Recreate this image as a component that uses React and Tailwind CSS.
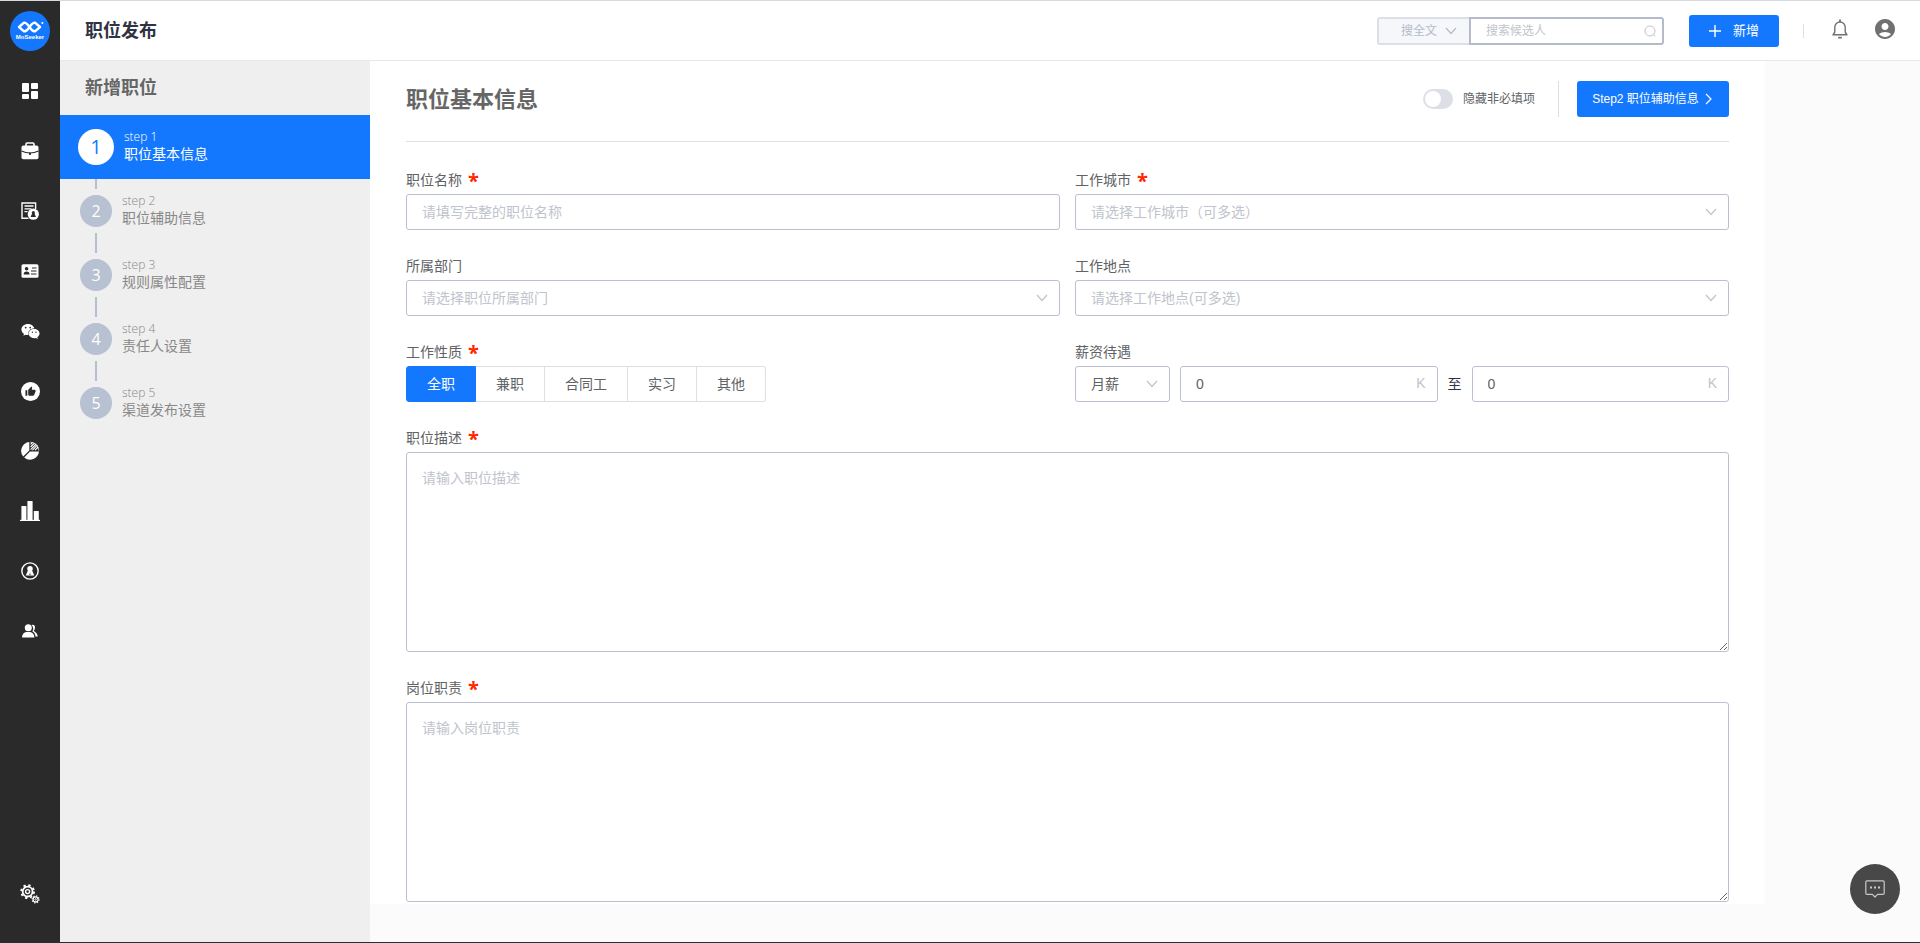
import { useState } from 'react';
import { FaWeixin } from 'react-icons/fa';
import { MdAccountCircle, MdThumbUp } from 'react-icons/md';

const DashboardIcon = () => (
  <svg width="16" height="16" viewBox="0 0 16 16" fill="currentColor">
    <rect x="0" y="0" width="7" height="9" rx="1" />
    <rect x="9" y="0" width="7" height="6" rx="1" />
    <rect x="0" y="11" width="7" height="5" rx="1" />
    <rect x="9" y="8" width="7" height="8" rx="1" />
  </svg>
);

const BriefcaseIcon = () => (
  <svg width="18" height="18" viewBox="0 0 18 18">
    <path d="M5 4V2.2Q5 1 6.2 1h5.6Q13 1 13 2.2V4" fill="none" stroke="currentColor" strokeWidth="1.6" />
    <rect x="0.5" y="3.6" width="17" height="13.6" rx="1.8" fill="currentColor" />
    <path d="M0.5 9Q9 13 17.5 9" fill="none" stroke="#2a2a2a" strokeWidth="1.1" />
    <rect x="8" y="10.4" width="2" height="2.6" rx="0.8" fill="#2a2a2a" />
  </svg>
);

const ResumeIcon = () => (
  <svg width="18" height="18" viewBox="0 0 18 18">
    <path d="M7.5 16.3H1V1h13.6v6" fill="none" stroke="currentColor" strokeWidth="1.4" />
    <path d="M3.5 4h9M3.5 6.8h7M3.5 9.6h3" stroke="currentColor" strokeWidth="1.3" />
    <circle cx="12.3" cy="12.2" r="5.6" fill="currentColor" />
    <circle cx="12.3" cy="10.4" r="1.5" fill="#2a2a2a" />
    <path d="M11.3 11h2l1.7 4H9.6z" fill="#2a2a2a" />
  </svg>
);

const IdCardIcon = () => (
  <svg width="18" height="14" viewBox="0 0 18 14">
    <rect x="0.5" y="0.2" width="17" height="13.6" rx="1.6" fill="currentColor" />
    <circle cx="5.6" cy="4.8" r="1.8" fill="#2a2a2a" />
    <path d="M2.6 10.4q0-3 3-3t3 3z" fill="#2a2a2a" />
    <path d="M11 4h4.5M10 7h5.5M10 10h5.5" stroke="#2a2a2a" strokeWidth="1.1" />
  </svg>
);

const ThumbIcon = () => (
  <span className="flex size-[19px] items-center justify-center rounded-full bg-white text-[#2a2a2a]">
    <MdThumbUp size={11} />
  </span>
);

const PieIcon = () => (
  <svg width="20" height="20" viewBox="0 0 20 20">
    <path d="M9.3 9.6V1A9 9 0 0 0 3.2 15.6z" fill="currentColor" />
    <path d="M10 10.6h9A9 9 0 0 1 4.2 16.4z" fill="currentColor" />
    <path d="M10.6 3.4l2-2M10.6 6l3.8-3.8M10.6 8.6l5.6-5.6M12.4 9.2l5-5M15 9.2l3.2-3.2" stroke="currentColor" strokeWidth="1.1" />
    <path d="M10.4 1.2a8.6 8.6 0 0 1 8.4 8.3" fill="none" stroke="currentColor" strokeWidth="0.7" />
  </svg>
);

const BarsIcon = () => (
  <svg width="20" height="20" viewBox="0 0 20 20" fill="currentColor">
    <rect x="1.4" y="5" width="5" height="14" rx="0.6" />
    <rect x="7.4" y="0" width="5.2" height="19" rx="0.6" />
    <rect x="13.8" y="10" width="5" height="9" rx="0.6" />
    <rect x="0" y="18.8" width="20" height="1.2" />
  </svg>
);

const PersonRingIcon = () => (
  <svg width="18" height="18" viewBox="0 0 19 19">
    <circle cx="9.5" cy="9.5" r="8.6" fill="none" stroke="currentColor" strokeWidth="1.5" />
    <circle cx="9.5" cy="7.2" r="2.9" fill="currentColor" />
    <path d="M7.4 8.8h4.2l2.400 5.400H5z" fill="currentColor" />
    <path d="M9.5 11l.7 2.600H8.800z" fill="#2a2a2a" />
  </svg>
);

const UsersIcon = () => (
  <svg width="16" height="14" viewBox="0 0 16 14" fill="currentColor">
    <circle cx="6.3" cy="3.8" r="3.5" />
    <path d="M0 13.6q0-4.2 4-5.6h4.4q4 1.4 4 5.6z" />
    <path d="M9.6 1q3.4-.8 3.4 2.6 0 2-1.2 3.4 3.4 1.8 4 5.6h-2.3q-.4-3.8-3.1-5 2-3.6-.8-6.6z" />
  </svg>
);

const GearsIcon = () => (
  <svg width="20" height="20" viewBox="0 0 20 20" fill="none" stroke="currentColor">
    <circle cx="7.6" cy="7.6" r="4.9" strokeWidth="1.8" />
    <circle cx="7.6" cy="7.6" r="6.4" strokeWidth="1.9" strokeDasharray="2.3 2.727" />
    <circle cx="7.6" cy="7.6" r="2" strokeWidth="1.4" />
    <circle cx="15.6" cy="15.4" r="2.5" strokeWidth="1.2" />
    <circle cx="15.6" cy="15.4" r="3.5" strokeWidth="1.2" strokeDasharray="1.25 1.5" />
    <circle cx="15.6" cy="15.4" r="0.8" strokeWidth="0.8" />
  </svg>
);

const LogoMark = () => (
  <svg width="28" height="12" viewBox="0 0 28 12" fill="none" stroke="currentColor">
    <path
      d="M13.500 6Q10.600 1.600 8 1.600L3 6l5 4.400Q10.600 10.400 13.500 6t5.500-4.400L24 6l-5 4.400Q16.400 10.400 13.500 6z"
      strokeWidth="2.400"
      strokeLinejoin="round"
    />
    <circle cx="26.400" cy="2" r="1" fill="currentColor" stroke="none" />
  </svg>
);

const ChevronDown = ({ className = '' }) => (
  <svg width="12" height="8" viewBox="0 0 12 8" fill="none" stroke="currentColor" strokeWidth="1.2" className={className}>
    <path d="M1 1l5 5.5L11 1" />
  </svg>
);

const BellIcon = () => (
  <svg width="18" height="20" viewBox="0 0 18 20" fill="none" stroke="currentColor" strokeWidth="1.4">
    <path d="M9 3a5.2 5.2 0 0 0-5.2 5.2V13L2 15.8h14L14.2 13V8.2A5.2 5.2 0 0 0 9 3z" strokeLinejoin="round" />
    <path d="M9 .6V3M7.2 18.6h3.6" strokeWidth="1.8" />
  </svg>
);

const ChatIcon = () => (
  <svg width="20" height="18" viewBox="0 0 20 18" fill="none" stroke="currentColor" strokeWidth="1.2">
    <path d="M2 .8h16q1.2 0 1.2 1.2v11.2q0 1.2-1.2 1.2h-5.4L10 17l-2.6-2.6H2q-1.2 0-1.2-1.2V2Q.8.8 2 .8z" strokeLinejoin="round" />
    <path d="M5 7.5h2M9 7.5h2M13 7.5h2" strokeWidth="1.8" />
  </svg>
);

const nav = [
  { label: '工作台', Icon: DashboardIcon },
  { label: '职位', Icon: BriefcaseIcon },
  { label: '简历', Icon: ResumeIcon },
  { label: '人才库', Icon: IdCardIcon },
  { label: '微信', Icon: () => <FaWeixin size={19} /> },
  { label: '推荐', Icon: ThumbIcon },
  { label: '分析', Icon: PieIcon },
  { label: '报表', Icon: BarsIcon },
  { label: '账号', Icon: PersonRingIcon },
  { label: '团队', Icon: UsersIcon },
];

const steps = ['职位基本信息', '职位辅助信息', '规则属性配置', '责任人设置', '渠道发布设置'];

const jobTypes = ['全职', '兼职', '合同工', '实习', '其他'];

const controlClass =
  'w-full h-9 rounded-[3px] border border-[#bac0d0] bg-white px-[15px] text-sm outline-none placeholder:text-[#c0c4cc]';

function Label({ htmlFor, required, children }) {
  return (
    <label htmlFor={htmlFor} className="mb-1 flex h-5 items-center gap-1.5 text-sm text-[#606266]">
      {children}
      {required && <span className="h-3 font-['Open_Sans'] text-xl leading-3.5 font-bold text-[#ff2600]">*</span>}
    </label>
  );
}

function SelectField({ id, label, required, placeholder }) {
  return (
    <div>
      <Label htmlFor={id} required={required}>{label}</Label>
      <div className="relative">
        <select id={id} className={`${controlClass} appearance-none text-[#c0c4cc]`}>
          <option>{placeholder}</option>
        </select>
        <ChevronDown className="pointer-events-none absolute top-3.5 right-3 text-[#c0c4cc]" />
      </div>
    </div>
  );
}

function TextareaField({ id, label, placeholder }) {
  return (
    <div>
      <Label htmlFor={id} required>{label}</Label>
      <textarea
        id={id}
        placeholder={placeholder}
        className="block h-[200px] w-full resize rounded-[3px] border border-[#bac0d0] bg-white p-[15px] text-sm outline-none placeholder:text-[#c0c4cc]"
      />
    </div>
  );
}

function SalaryInput({ label }) {
  return (
    <div className="relative flex-1">
      <input type="text" defaultValue="0" aria-label={label} className={`${controlClass} text-[#606266]`} />
      <span className="absolute top-0 right-3 text-sm leading-[34px] text-[#c0c4cc]">K</span>
    </div>
  );
}

function Sidebar() {
  return (
    <aside className="flex w-15 shrink-0 flex-col items-center bg-[#2a2a2a] text-white">
      <a href="#" aria-label="首页" className="my-2.5 flex size-10 flex-col items-center justify-center rounded-full bg-[#1478ff]">
        <LogoMark />
        <span className="text-[6px] leading-2 font-bold">MoSeeker</span>
      </a>
      <nav className="flex flex-1 flex-col">
        {nav.map(({ label, Icon }) => (
          <a key={label} href="#" aria-label={label} className="flex size-15 items-center justify-center">
            <Icon />
          </a>
        ))}
      </nav>
      <a href="#" aria-label="设置" className="mb-[18px] flex size-15 items-center justify-center">
        <GearsIcon />
      </a>
    </aside>
  );
}

function Header() {
  return (
    <header className="flex h-15 shrink-0 items-center border-b border-[#e6e8f0] bg-white pr-[23px] pl-[25px]">
      <h1 className="text-lg font-bold text-[#303342]">职位发布</h1>

      <div className="ml-auto flex h-7 items-stretch text-xs">
        <div className="relative">
          <select
            aria-label="搜索范围"
            className="h-7 w-[92px] appearance-none rounded-l-[3px] border-2 border-r-0 border-[#dcdfe6] bg-[#f5f7fa] pl-[22px] text-[#b4bccc] outline-none"
          >
            <option>搜全文</option>
          </select>
          <ChevronDown className="pointer-events-none absolute top-2.5 right-3 text-[#b4bccc]" />
        </div>
        <div className="relative">
          <input
            type="text"
            aria-label="搜索"
            placeholder="搜索候选人"
            className="h-7 w-[195px] rounded-r-[3px] border-2 border-[#b4bccc] px-[15px] outline-none placeholder:text-[#c0c4cc]"
          />
          <svg width="12" height="12" viewBox="0 0 12 12" fill="none" stroke="#c0c4cc" className="absolute top-2 right-2">
            <circle cx="6" cy="6" r="5" />
            <path d="M9 9l2 2.5" />
          </svg>
        </div>
      </div>

      <button type="button" className="ml-[25px] flex h-8 w-[90px] items-center justify-center gap-3 rounded-[3px] bg-[#1478ff] text-[13px] text-white">
        <svg width="12" height="12" viewBox="0 0 12 12" stroke="currentColor" strokeWidth="1.4">
          <path d="M6 0v12M0 6h12" />
        </svg>
        新增
      </button>
      <span className="mr-[27px] ml-6 h-3.5 w-px bg-[#dcdfe6]" />
      <button type="button" aria-label="通知" className="mr-6 pb-1 text-[#707070]">
        <BellIcon />
      </button>
      <button type="button" aria-label="账户" className="pb-1 text-[#707070]">
        <MdAccountCircle size={24} />
      </button>
    </header>
  );
}

function StepPanel() {
  return (
    <aside className="w-[310px] shrink-0 bg-[#efefef]">
      <h2 className="flex h-[54px] items-center pl-[25px] text-lg font-bold text-[#666]">新增职位</h2>
      <ol>
        {steps.map((title, i) => {
          const active = i === 0;
          const last = i === steps.length - 1;
          return (
            <li key={title} className={active ? 'bg-[#1478ff]' : ''}>
              <a href="#" className={`flex h-16 items-stretch pl-[18px] ${active ? 'gap-2.5' : 'gap-2'}`}>
                <span className="flex w-9 flex-col items-center justify-between">
                  <span className={`w-0.5 ${active ? 'h-0' : 'h-2.5 bg-[#b4bfd0]'}`} />
                  <span
                    className={`flex shrink-0 items-center justify-center rounded-full font-['Open_Sans'] ${
                      active ? 'size-9 bg-white text-xl text-[#1478ff]' : 'size-8 bg-[#b7c1d1] text-base text-white'
                    }`}
                  >
                    {i + 1}
                  </span>
                  <span className={`w-0.5 ${active ? 'h-0' : 'h-2.5'} ${active || last ? '' : 'bg-[#b4bfd0]'}`} />
                </span>
                <span className="flex flex-col justify-center pb-0.5">
                  <span className={`font-['Open_Sans'] text-xs leading-4 font-light ${active ? 'text-white' : 'text-[#888]'}`}>step {i + 1}</span>
                  <span className={`text-sm leading-[18px] ${active ? 'text-white' : 'text-[#888]'}`}>{title}</span>
                </span>
              </a>
            </li>
          );
        })}
      </ol>
    </aside>
  );
}

function JobForm() {
  const [jobType, setJobType] = useState('全职');

  return (
    <form className="w-[90%] bg-white px-9 pt-5 pb-0.5">
      <div className="flex items-center border-b border-[#dcdfe6] pb-6">
        <h2 className="pt-0.5 text-[22px] leading-8 font-bold text-[#666]">职位基本信息</h2>
        <label className="ml-auto flex cursor-pointer items-center gap-2.5 text-xs text-[#606266]">
          <input type="checkbox" className="peer sr-only" />
          <span className="flex h-5 w-[30px] items-center rounded-full bg-[#dcdfe6] p-0.5 peer-checked:justify-end peer-checked:bg-[#1478ff]">
            <span className="size-4 rounded-full bg-white" />
          </span>
          隐藏非必填项
        </label>
        <span className="mr-[18px] ml-[23px] h-9 w-px bg-[#dcdfe6]" />
        <button type="button" className="flex h-9 w-[152px] items-center justify-center gap-1.5 rounded-[3px] bg-[#1478ff] pr-0.5 text-xs text-white">
          Step2 职位辅助信息
          <svg width="7" height="12" viewBox="0 0 7 12" fill="none" stroke="currentColor" strokeWidth="1.2">
            <path d="M1 1l5 5-5 5" />
          </svg>
        </button>
      </div>

      <div className="mt-7 grid grid-cols-2 gap-x-[15px] gap-y-[26px]">
        <div>
          <Label htmlFor="jobName" required>职位名称</Label>
          <input id="jobName" type="text" placeholder="请填写完整的职位名称" className={`${controlClass} text-[#606266]`} />
        </div>
        <SelectField id="city" label="工作城市" required placeholder="请选择工作城市（可多选）" />
        <SelectField id="department" label="所属部门" placeholder="请选择职位所属部门" />
        <SelectField id="location" label="工作地点" placeholder="请选择工作地点(可多选)" />

        <div role="radiogroup" aria-label="工作性质">
          <Label htmlFor="jobType-0" required>工作性质</Label>
          <div className="flex text-sm">
            {jobTypes.map((type, i) => (
              <label
                key={type}
                className={`flex h-9 cursor-pointer items-center border border-l-0 px-5 first:rounded-l-[3px] first:border-l last:rounded-r-[3px] ${
                  jobType === type ? 'border-[#1478ff] bg-[#1478ff] text-white' : 'border-[#dcdfe6] bg-white text-[#606266]'
                }`}
              >
                <input
                  id={`jobType-${i}`}
                  type="radio"
                  name="jobType"
                  checked={jobType === type}
                  onChange={() => setJobType(type)}
                  className="sr-only"
                />
                {type}
              </label>
            ))}
          </div>
        </div>

        <div>
          <Label htmlFor="salaryType">薪资待遇</Label>
          <div className="flex items-center gap-2.5 text-sm text-[#303342]">
            <div className="relative w-[95px]">
              <select id="salaryType" className={`${controlClass} appearance-none text-[#606266]`}>
                <option>月薪</option>
              </select>
              <ChevronDown className="pointer-events-none absolute top-3.5 right-3 text-[#c0c4cc]" />
            </div>
            <SalaryInput label="最低薪资" />
            至
            <SalaryInput label="最高薪资" />
          </div>
        </div>

        <div className="col-span-2">
          <TextareaField id="description" label="职位描述" placeholder="请输入职位描述" />
        </div>
        <div className="col-span-2">
          <TextareaField id="duty" label="岗位职责" placeholder="请输入岗位职责" />
        </div>
      </div>
    </form>
  );
}

export default function App() {
  return (
    <div className="flex h-screen overflow-hidden border-t border-b border-t-[#d7d9e0] border-b-[#22313f] bg-[#fbfbfb] font-['Liberation_Sans','Noto_Sans_CJK_SC',sans-serif]">
      <Sidebar />
      <div className="flex min-w-0 flex-1 flex-col">
        <Header />
        <div className="flex min-h-0 flex-1">
          <StepPanel />
          <main className="min-w-0 flex-1 overflow-hidden">
            <JobForm />
          </main>
        </div>
      </div>

      <button
        type="button"
        aria-label="在线客服"
        className="fixed right-5 bottom-[29px] flex size-[50px] items-center justify-center rounded-full bg-[#484848] text-[#c8c8c8]"
      >
        <ChatIcon />
      </button>
    </div>
  );
}
